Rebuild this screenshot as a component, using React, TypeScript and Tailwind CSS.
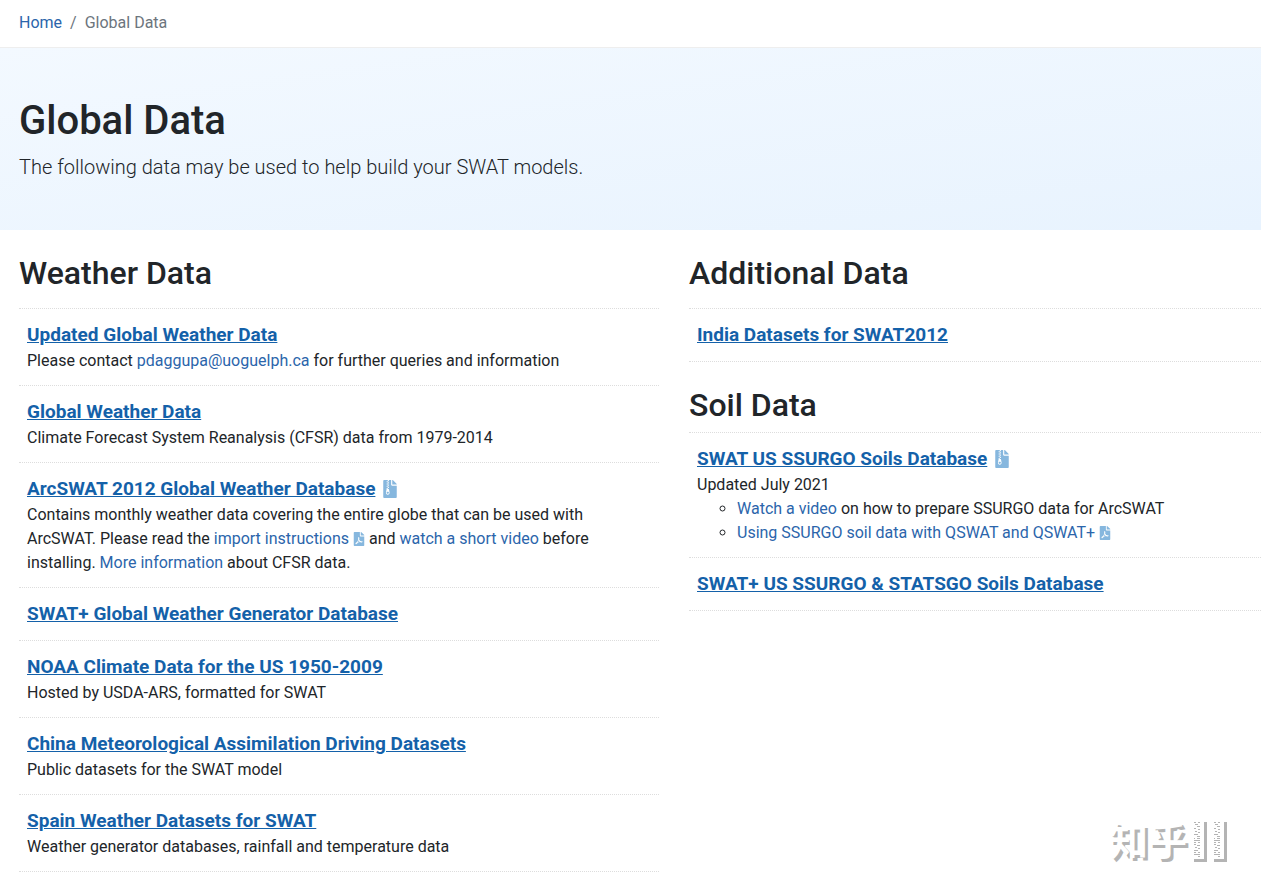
import React from "react";
import { FaFileArchive, FaFilePdf } from "react-icons/fa";

const linkClass = "text-[#2b65ab] hover:underline";

const ZipIcon = () => <FaFileArchive className="inline-block w-3.5 h-[18px] ml-2 mb-0.5 align-middle text-[#86b7de]" />;
const PdfIcon = () => <FaFilePdf className="inline-block w-3 h-3.5 ml-1 mb-0.5 align-middle text-[#86b7de]" />;

interface ItemProps {
  title: string;
  zip?: boolean;
  children?: React.ReactNode;
}

const Item: React.FC<ItemProps> = ({ title, zip, children }) => {
  return (
    <li className="border-t border-dotted border-[#dddddd] last:border-b px-2 py-3">
      <h3 className="text-[19px] leading-7 font-bold">
        <a href="#" className="text-[#1461a9] underline">{title}</a>
        {zip && <ZipIcon />}
      </h3>
      {children}
    </li>
  );
};

// white characters that are only visible by their grey shadow
const Watermark = () => (
  <div className="absolute right-7 bottom-3 flex items-center" aria-hidden="true">
    <span className="mr-1.5 pb-2 text-[39px] leading-[60px] font-bold text-white [text-shadow:3px_3px_0_#b4b4b4] font-['Noto_Sans_CJK_SC',sans-serif]">
      知乎
    </span>
    {[0, 1].map((i) => (
      <svg key={i} width="20" height="42" viewBox="0 0 20 42" fill="none">
        <path d="M11 1h3v40H1v-3h10z" fill="#b4b4b4" />
        <path
          d="M1 1.5h2M5 1.5h2M2 3.5h3M4 5.5h3M1 7.5h2M5 8.5h2M2 10.5h2M5 11.5h2M1 13.5h4M4 15.5h3M1 17.5h1M4 17.5h3M1 19.5h6M1 21.5h2M5 21.5h2M1 23.5h2M4 24.5h3M2 26.5h2M5 27.5h2M1 29.5h4M1 31.5h2M5 31.5h2M1 33.5h6M5 35.5h2"
          stroke="#b4b4b4"
        />
      </svg>
    ))}
  </div>
);

const App: React.FC = () => {
  return (
    <div className="relative w-full bg-white text-[#212529] text-base leading-6 font-['Roboto',sans-serif] pb-4">
      <nav aria-label="breadcrumb" className="px-[19px] pt-[11px] pb-3 border-b border-[#eeeeee]">
        <ol className="flex">
          <li><a href="#" className={linkClass}>Home</a></li>
          <li className="px-2 text-[#6c757d]">/</li>
          <li className="text-[#6c757d]">Global Data</li>
        </ol>
      </nav>

      <header className="px-[19px] py-12 bg-linear-172 from-[#f3f9ff] to-[#e8f3fe]">
        <h1 className="text-[40px] leading-[50px] font-medium mb-1.5">Global Data</h1>
        <p className="text-xl leading-[30px] font-light">The following data may be used to help build your SWAT models.</p>
      </header>

      <main className="grid grid-cols-[640fr_572fr] gap-x-[30px] pl-[19px] pt-6">
        <section>
          <h2 className="text-[32px] leading-[38px] font-medium mb-4">Weather Data</h2>
          <ul>
            <Item title="Updated Global Weather Data">
              <p>
                Please contact <a href="mailto:pdaggupa@uoguelph.ca" className={linkClass}>pdaggupa@uoguelph.ca</a> for further queries and information
              </p>
            </Item>
            <Item title="Global Weather Data">
              <p>Climate Forecast System Reanalysis (CFSR) data from 1979-2014</p>
            </Item>
            <Item title="ArcSWAT 2012 Global Weather Database" zip>
              <p>
                Contains monthly weather data covering the entire globe that can be used with ArcSWAT. Please read the{" "}
                <a href="#" className={linkClass}>import instructions<PdfIcon /></a> and{" "}
                <a href="#" className={linkClass}>watch a short video</a> before installing.{" "}
                <a href="#" className={linkClass}>More information</a> about CFSR data.
              </p>
            </Item>
            <Item title="SWAT+ Global Weather Generator Database" />
            <Item title="NOAA Climate Data for the US 1950-2009">
              <p>Hosted by USDA-ARS, formatted for SWAT</p>
            </Item>
            <Item title="China Meteorological Assimilation Driving Datasets">
              <p>Public datasets for the SWAT model</p>
            </Item>
            <Item title="Spain Weather Datasets for SWAT">
              <p>Weather generator databases, rainfall and temperature data</p>
            </Item>
          </ul>
        </section>

        <section>
          <h2 className="text-[32px] leading-[38px] font-medium mb-4">Additional Data</h2>
          <ul>
            <Item title="India Datasets for SWAT2012" />
          </ul>

          <h2 className="text-[32px] leading-[38px] font-medium mt-6 mb-2">Soil Data</h2>
          <ul>
            <Item title="SWAT US SSURGO Soils Database" zip>
              <p>Updated July 2021</p>
              <ul className="list-[circle] pl-10">
                <li>
                  <a href="#" className={linkClass}>Watch a video</a> on how to prepare SSURGO data for ArcSWAT
                </li>
                <li>
                  <a href="#" className={linkClass}>Using SSURGO soil data with QSWAT and QSWAT+<PdfIcon /></a>
                </li>
              </ul>
            </Item>
            <Item title="SWAT+ US SSURGO & STATSGO Soils Database" />
          </ul>
        </section>
      </main>
      <Watermark />
    </div>
  );
};

export default App;
